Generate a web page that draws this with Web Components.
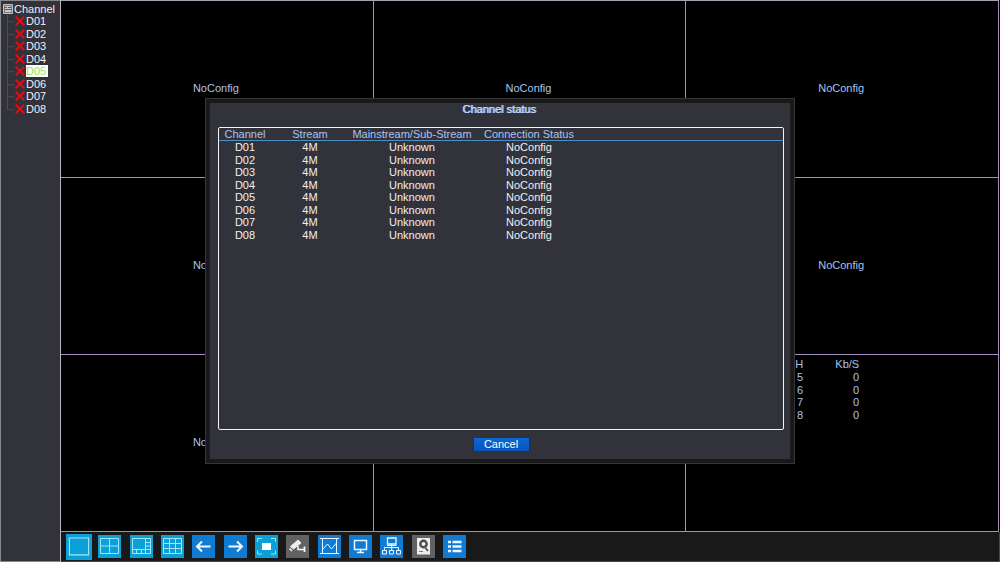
<!DOCTYPE html>
<html lang="en">
<head>
<meta charset="utf-8">
<title>Channel status</title>
<style>
html, body { margin: 0; height: 100%; }
body { background: #000; color: #f0f0f0; font: 11px/12px "Liberation Sans", Arial, sans-serif; overflow: hidden; }
</style>
</head>
<body>
<nvr-app></nvr-app>
<script>
const define = (name, render) => customElements.define(name, class extends HTMLElement {
  connectedCallback() {
    if (this.shadowRoot) return;
    this.attachShadow({ mode: 'open' }).innerHTML = render(this);
  }
});
const channels = ['D01', 'D02', 'D03', 'D04', 'D05', 'D06', 'D07', 'D08'];

define('nvr-app', () => `
<style>
:host { display: grid; grid-template-columns: 60px 1fr; height: 100vh; box-sizing: border-box; }
main { display: grid; grid-template-rows: 1fr 30px; min-width: 0; border-left: 1px solid #b9b2c0; }
</style>
<channel-tree></channel-tree>
<main><video-wall></video-wall><tool-bar></tool-bar></main>
<status-dialog heading="Channel status"><status-table></status-table></status-dialog>`);

define('channel-tree', () => `
<style>
:host { display: block; background: #32323b; border: solid #85858a; border-width: 1px 0 1px 1px; padding: 2px 0 0 2px; box-sizing: border-box; }
h2 { display: flex; align-items: center; gap: 1px; margin: 0; height: 12px; font: inherit; }
ul { display: grid; grid-template-rows: repeat(8, 1fr); height: 100px; margin: 0; padding: 0; list-style: none; }
</style>
<h2><svg width="10" height="10" viewBox="0 0 10 10"><path d="M.5.5h9v9h-9z" fill="#777" stroke="#c4c4c4"/><path d="M2 2h6v6H2z" fill="#ccc"/><path d="M2 3.500h2M5 3.500h3M2 5.500h6" stroke="#555"/></svg>Channel</h2>
<ul>${channels.map(c => `<tree-item name="${c}"${c === 'D05' ? ' selected' : ''}${c === 'D08' ? ' last' : ''} role="listitem"></tree-item>`).join('')}</ul>`);

define('tree-item', el => `
<style>
:host { display: flex; padding-left: 4px; min-height: 0; }
button { display: flex; align-items: center; gap: 1px; border: 0; padding: 0; background: none; color: inherit; font: inherit; }
.line { flex: none; width: 8px; height: 100%; stroke: #4d4d53; }
.x { flex: none; width: 10px; height: 10px; }
:host([selected]) span { background: #fff; color: #86ea60; padding-right: 2px; }
</style>
<svg class="line" viewBox="0 0 8 12" preserveAspectRatio="none"><path d="M.5 0V${el.hasAttribute('last') ? 6 : 12}M0 6.5H7" fill="none"/></svg>
<button type="button"><svg class="x" viewBox="0 0 10 10"><path d="M.7.7l8.6 8.6M9.3.7L.7 9.3" stroke="#e00d12" stroke-width="2.2"/></svg><span>${el.getAttribute('name')}</span></button>`);

define('video-wall', () => `
<style>
:host { display: grid; grid-template: repeat(3, 1fr) / repeat(3, 1fr); border-top: 1px solid #a79fb0; margin-right: 1px; }
</style>
${['NoConfig', 'NoConfig', 'NoConfig', 'NoConfig', '', 'NoConfig', 'NoConfig', ''].map(t => `<video-cell>${t}</video-cell>`).join('')}
<video-cell class="rates"><rate-table></rate-table></video-cell>`);

define('video-cell', () => `
<style>
:host { display: grid; place-items: center; border: solid #a58cc0; border-width: 0 1px 1px 0; padding: 0 2px 2px 0; color: #a9c4f0; min-height: 0; }
:host(.rates) { place-items: start center; }
</style><slot></slot>`);

define('rate-table', () => `
<style>
:host { display: block; padding: 3px 0 0 0; }
table { border-collapse: collapse; text-align: right; margin-right: 36px; }
th, td { font-weight: normal; padding: 0; }
th { height: 13px; }
thead, tbody, tr { display: grid; }
tr { grid-template-columns: 16px 56px; }
tbody { height: 50px; grid-template-rows: repeat(4, 1fr); }
</style>
<table><thead><tr><th scope="col">CH</th><th scope="col">Kb/S</th></tr></thead>
<tbody>${[5, 6, 7, 8].map(n => `<tr><td>${n}</td><td>0</td></tr>`).join('')}</tbody></table>`);

const icons = {
  one: ['Single view', '<path d="M3 3.5h17v15H3z"/>'],
  four: ['Four views', '<path d="M2.5 3.5h18v15h-18zM11.5 3.5v15M2.5 11h18"/>'],
  eight: ['Eight views', '<path d="M2.5 3.5h18v15h-18zM15.5 3.5v15M2.5 14.5h18M6.5 14.5v4M11.5 14.5v4M15.5 7.5h5M15.5 11h5"/>'],
  nine: ['Nine views', '<path d="M2.5 3.5h18v15h-18zM8.5 3.5v15M14.5 3.5v15M2.5 8.5h18M2.5 13.5h18"/>'],
  prev: ['Previous', '<path d="M18.5 11.5H5M10 6.5l-5 5 5 5" stroke-width="2"/>'],
  next: ['Next', '<path d="M4.5 11.5H18M13 6.5l5 5-5 5" stroke-width="2"/>'],
  focus: ['Full screen', '<path d="M2.5 7V3.5H7M16 3.5h4.5V7M20.5 15.5V19H16M7 19H2.5v-3.5"/><path d="M7 8h9v7H7z" fill="#fff" stroke="none"/>'],
  camera: ['Camera', '<path d="M4.500 11.500l7.500-6.500 3 3-7.500 6z" fill="#eee" stroke="#eee" stroke-linejoin="round"/><path d="M3.500 13.500l2.500 2.500M12 11v3.500h6.500" stroke-width="1.500"/><path d="M18.500 11.500v5.500" stroke-width="1.800"/>'],
  chart: ['Image settings', '<path d="M2 3.5h19M2 18.5h19M4.5 3.5v15M18.5 3.5v15M5 14l4.5-5 4 5 5-6"/>'],
  monitor: ['Display', '<path d="M5.5 5.5h12v9h-12zM11.5 14.5V17M8 17.5h7" stroke-width="1.5"/>'],
  network: ['Network', '<path d="M7.500 3h8.500v6H7.500z" stroke-width="1.300"/><path d="M11.700 9v6M7 10.500h9.500M4.500 15v-2.500h14V15M2.500 15.500h4v3.500h-4zM9.500 15.500h4v3.500h-4zM16.500 15.500h4v3.500h-4z"/>'],
  disk: ['Hard disk', '<path d="M5 3h13v16.500H5z" fill="#eee" stroke="none"/><circle cx="11.500" cy="9" r="3.200" stroke="#4b4b4b" stroke-width="2.400"/><path d="M12 11l4 5" stroke="#555" stroke-width="2"/><path d="M7 16.500h4" stroke="#777"/>'],
  list: ['Menu', '<path d="M5 7h3M5 11.500h3M5 16h3M9.500 7h9M9.500 11.500h9M9.500 16h9" stroke-width="2.500"/>']
};
const tones = { one: 'sky', four: 'sky', eight: 'sky', nine: 'sky', focus: 'sky', camera: 'gray', disk: 'gray' };

define('tool-bar', () => `
<style>
:host { display: block; box-sizing: border-box; background: #191919; border: solid #484848; border-width: 0 1px 1px 0; padding-left: 2px; }
div { display: grid; grid-template-columns: repeat(13, 1fr); width: 407px; height: 100%; place-items: center; }
</style>
<div role="toolbar">${Object.keys(icons).map(k => `<tool-button icon="${k}" class="${tones[k] || ''}"></tool-button>`).join('')}</div>`);

define('tool-button', el => {
  const [label, art] = icons[el.getAttribute('icon')];
  return `
<style>
:host { display: block; --tone: #107bd3; --size: 23px; }
:host(.sky) { --tone: #0ba0d8; --line: #a5e4fa; }
:host(.gray) { --tone: #626262; }
:host([icon="one"]) { --size: 26px; }
button { display: block; border: 0; padding: 0; width: var(--size); height: var(--size); background: var(--tone); }
svg { display: block; width: 100%; height: 100%; fill: none; stroke: var(--line, #f0f8ff); }
</style>
<button type="button" aria-label="${label}"><svg viewBox="0 0 23 23">${art}</svg></button>`;
});

define('status-dialog', el => `
<style>
:host { position: fixed; inset: 0; display: grid; place-items: center; }
section { display: grid; grid-template-rows: 27px 1fr 29px; box-sizing: border-box; width: 59%; height: 65%; border: 1px solid #353535; outline: 4px solid #191919; outline-offset: -5px; background: #32323b; padding: 1px 10px 4px 12px; }
h1 { margin: 0; padding: 3px 4px 0 0; font: inherit; text-align: center; color: #c3dcff; text-shadow: 1px 0 #a9c4f0; }
.frame { border: 1px solid #f4f4f4; border-radius: 2px; min-height: 0; }
footer { display: grid; place-items: center; }
button { width: 57px; height: 15px; padding: 0; border: 1px solid #15336a; background: linear-gradient(#0b68d2, #0753bd); color: #fff; font: inherit; line-height: 12px; }
</style>
<section role="dialog" aria-labelledby="t"><h1 id="t">${el.getAttribute('heading')}</h1>
<div class="frame"><slot></slot></div>
<footer><button type="button">Cancel</button></footer></section>`);

define('status-table', () => `
<style>
:host { display: block; }
table { display: block; text-align: center; border-spacing: 0; }
thead, tbody, tr { display: grid; }
thead { border-bottom: 1px solid #4a90c4; color: #a9c4f0; }
tr { grid-template-columns: 52px 78px 126px 108px; }
thead tr { height: 12px; }
tbody { height: 100px; grid-template-rows: repeat(8, 1fr); color: #f0f0f0; }
th, td { padding: 0; font-weight: normal; white-space: nowrap; }
</style>
<table><thead><tr><th scope="col">Channel</th><th scope="col">Stream</th><th scope="col">Mainstream/Sub-Stream</th><th scope="col">Connection Status</th></tr></thead>
<tbody>${channels.map(c => `<tr><td>${c}</td><td>4M</td><td>Unknown</td><td>NoConfig</td></tr>`).join('')}</tbody></table>`);
</script>
</body>
</html>
